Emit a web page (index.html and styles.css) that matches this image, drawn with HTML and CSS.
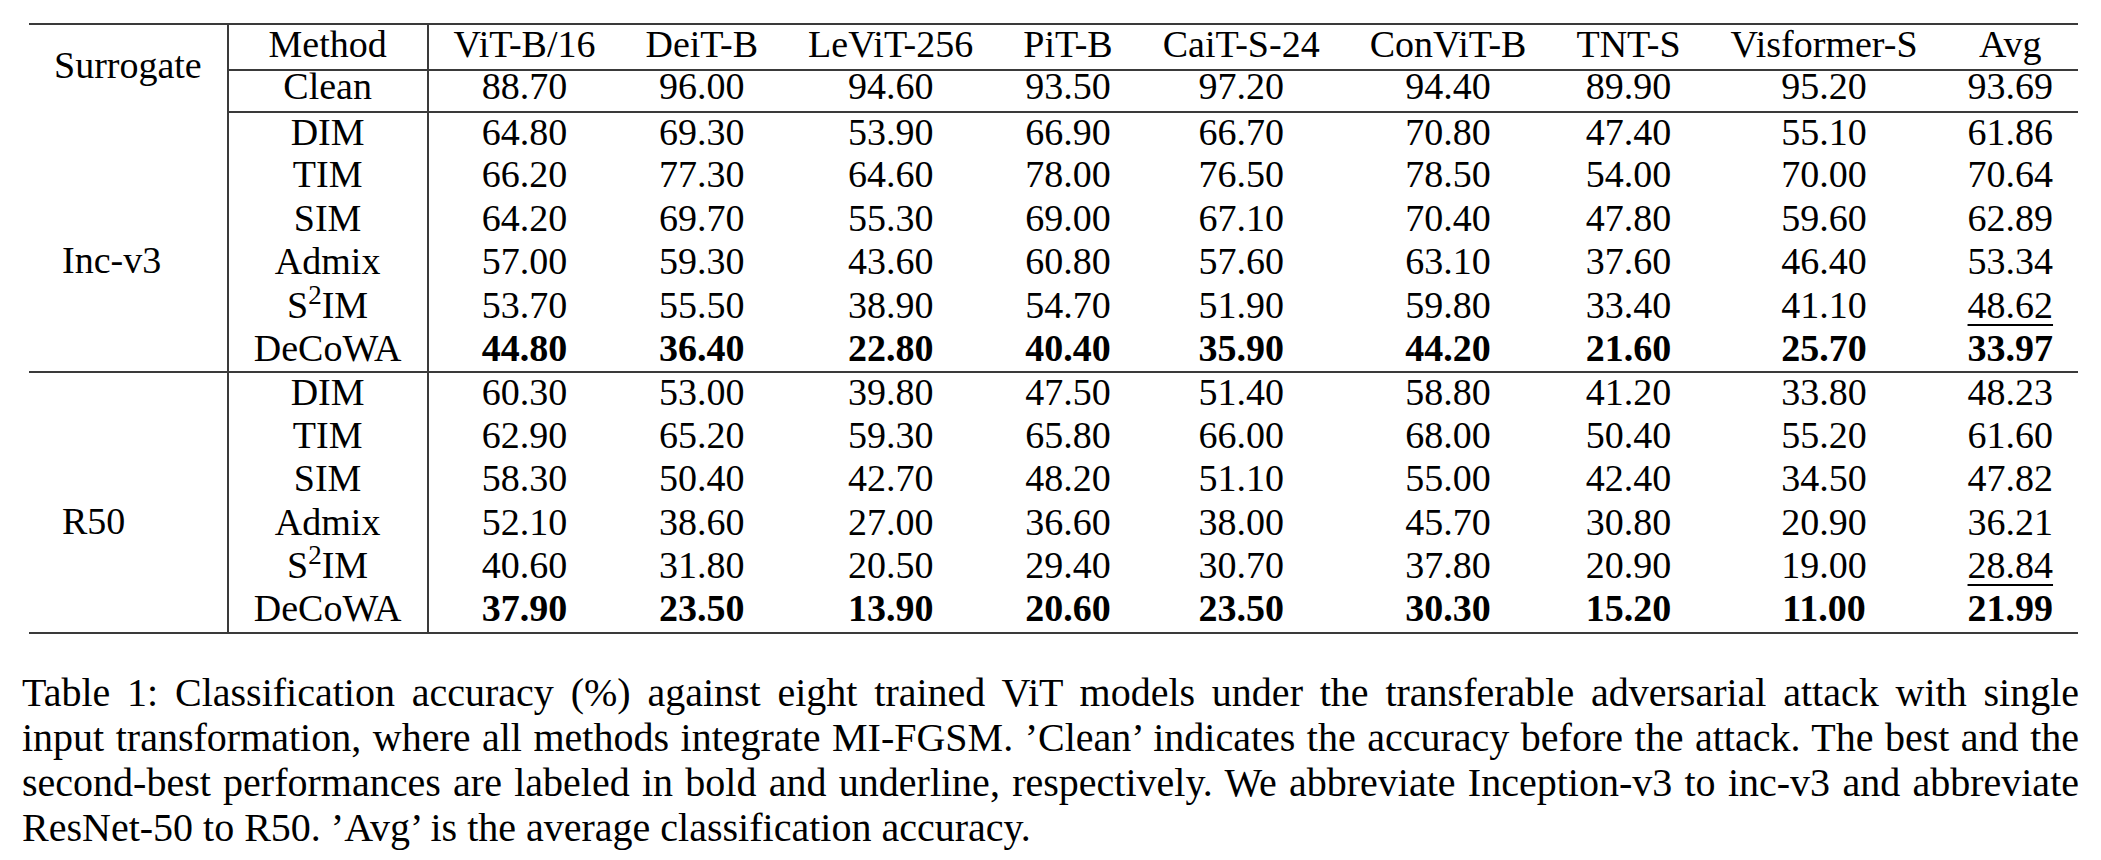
FILE: index.html
```html
<!DOCTYPE html>
<html lang="en">
<head>
<meta charset="utf-8">
<title>Table 1</title>
<link rel="stylesheet" href="styles.css">
</head>
<body>
<figure class="figure">
  <table class="results">
    <tbody>
      <tr class="row-head">
        <td class="group group-top" rowspan="2">Surrogate</td>
        <td class="method cline">Method</td>
        <td class="cline">ViT-B/16</td>
        <td class="cline">DeiT-B</td>
        <td class="cline">LeViT-256</td>
        <td class="cline">PiT-B</td>
        <td class="cline">CaiT-S-24</td>
        <td class="cline">ConViT-B</td>
        <td class="cline">TNT-S</td>
        <td class="cline">Visformer-S</td>
        <td class="cline">Avg</td>
      </tr>
      <tr class="row-clean sep">
        <td class="method">Clean</td>
        <td>88.70</td><td>96.00</td><td>94.60</td><td>93.50</td><td>97.20</td><td>94.40</td><td>89.90</td><td>95.20</td><td>93.69</td>
      </tr>

      <tr class="row">
        <td class="group group-block sep-cell" rowspan="6">Inc-v3</td>
        <td class="method">DIM</td>
        <td>64.80</td><td>69.30</td><td>53.90</td><td>66.90</td><td>66.70</td><td>70.80</td><td>47.40</td><td>55.10</td><td>61.86</td>
      </tr>
      <tr class="row">
        <td class="method">TIM</td>
        <td>66.20</td><td>77.30</td><td>64.60</td><td>78.00</td><td>76.50</td><td>78.50</td><td>54.00</td><td>70.00</td><td>70.64</td>
      </tr>
      <tr class="row">
        <td class="method">SIM</td>
        <td>64.20</td><td>69.70</td><td>55.30</td><td>69.00</td><td>67.10</td><td>70.40</td><td>47.80</td><td>59.60</td><td>62.89</td>
      </tr>
      <tr class="row">
        <td class="method">Admix</td>
        <td>57.00</td><td>59.30</td><td>43.60</td><td>60.80</td><td>57.60</td><td>63.10</td><td>37.60</td><td>46.40</td><td>53.34</td>
      </tr>
      <tr class="row">
        <td class="method">S<sup class="sq">2</sup>IM</td>
        <td>53.70</td><td>55.50</td><td>38.90</td><td>54.70</td><td>51.90</td><td>59.80</td><td>33.40</td><td>41.10</td><td><span class="second">48.62</span></td>
      </tr>
      <tr class="row sep">
        <td class="method">DeCoWA</td>
        <td class="best">44.80</td><td class="best">36.40</td><td class="best">22.80</td><td class="best">40.40</td><td class="best">35.90</td><td class="best">44.20</td><td class="best">21.60</td><td class="best">25.70</td><td class="best">33.97</td>
      </tr>

      <tr class="row">
        <td class="group group-block" rowspan="6">R50</td>
        <td class="method">DIM</td>
        <td>60.30</td><td>53.00</td><td>39.80</td><td>47.50</td><td>51.40</td><td>58.80</td><td>41.20</td><td>33.80</td><td>48.23</td>
      </tr>
      <tr class="row">
        <td class="method">TIM</td>
        <td>62.90</td><td>65.20</td><td>59.30</td><td>65.80</td><td>66.00</td><td>68.00</td><td>50.40</td><td>55.20</td><td>61.60</td>
      </tr>
      <tr class="row">
        <td class="method">SIM</td>
        <td>58.30</td><td>50.40</td><td>42.70</td><td>48.20</td><td>51.10</td><td>55.00</td><td>42.40</td><td>34.50</td><td>47.82</td>
      </tr>
      <tr class="row">
        <td class="method">Admix</td>
        <td>52.10</td><td>38.60</td><td>27.00</td><td>36.60</td><td>38.00</td><td>45.70</td><td>30.80</td><td>20.90</td><td>36.21</td>
      </tr>
      <tr class="row">
        <td class="method">S<sup class="sq">2</sup>IM</td>
        <td>40.60</td><td>31.80</td><td>20.50</td><td>29.40</td><td>30.70</td><td>37.80</td><td>20.90</td><td>19.00</td><td><span class="second">28.84</span></td>
      </tr>
      <tr class="row">
        <td class="method">DeCoWA</td>
        <td class="best">37.90</td><td class="best">23.50</td><td class="best">13.90</td><td class="best">20.60</td><td class="best">23.50</td><td class="best">30.30</td><td class="best">15.20</td><td class="best">11.00</td><td class="best">21.99</td>
      </tr>
    </tbody>
  </table>
  <figcaption class="caption">
    <span class="cap-line">Table 1: Classification accuracy (%) against eight trained ViT models under the transferable adversarial attack with single</span>
    <span class="cap-line">input transformation, where all methods integrate MI-FGSM. ’Clean’ indicates the accuracy before the attack. The best and the</span>
    <span class="cap-line">second-best performances are labeled in bold and underline, respectively. We abbreviate Inception-v3 to inc-v3 and abbreviate</span>
    <span class="cap-line cap-last">ResNet-50 to R50. ’Avg’ is the average classification accuracy.</span>
  </figcaption>
</figure>
</body>
</html>
```

FILE: styles.css
```css
html, body {
  margin: 0;
  padding: 0;
  background: #ffffff;
  color: #000000;
  font-family: "Liberation Serif", "Times New Roman", serif;
}

.figure {
  margin: 0;
  padding: 23px 22px 0 22px;
  width: 2057px;
}

.results {
  border-collapse: collapse;
  margin-left: 7px;
  font-size: 38px;
  border-top: 2px solid #3a3a3a;
  border-bottom: 2px solid #3a3a3a;
}

.results td {
  padding: 0 25px;
  text-align: center;
  vertical-align: top;
  white-space: nowrap;
  line-height: 38.95px;
}

.results .row-head td {
  line-height: 38.4px;
}

.row-head {
  height: 46px;
}

.row-clean {
  height: 42px;
}

.results .row-clean td {
  line-height: 31.8px;
}

.row {
  height: 43.4px;
}

.results .cline {
  border-bottom: 2px solid #3a3a3a;
}

.results .sep td,
.results .sep-cell {
  border-bottom: 2px solid #3a3a3a;
}

.results .group {
  border-right: 2px solid #3a3a3a;
}

.results .method {
  border-right: 2px solid #3a3a3a;
}

.results .group-top {
  line-height: 38px;
  padding-top: 21px;
}

.results .group-block {
  padding-top: 129px;
  padding-left: 33px;
  text-align: left;
}

.sq {
  font-size: 27px;
  line-height: 0;
  vertical-align: 14px;
}

.best {
  font-weight: bold;
}

.second {
  text-decoration: underline;
  text-decoration-thickness: 2px;
  text-underline-offset: 6px;
}

.caption {
  margin: 36px 0 0 0;
  font-size: 40px;
  line-height: 45px;
}

.cap-line {
  display: block;
  text-align: justify;
  text-align-last: justify;
  white-space: nowrap;
}

.cap-last {
  text-align-last: left;
}
```
